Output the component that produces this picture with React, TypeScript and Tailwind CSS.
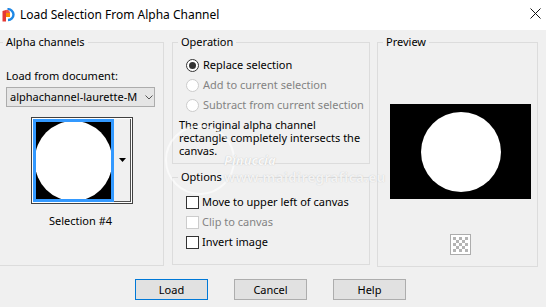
import React from 'react';

const font = "font-['Segoe_UI','Noto_Sans',sans-serif]";

function Radio({ label, checked, disabled }: { label: string; checked?: boolean; disabled?: boolean }) {
  return (
    <div className="flex items-center h-[20px] pl-[13px]">
      <span
        className={`w-[13px] h-[13px] rounded-full border bg-white flex items-center justify-center ${disabled ? 'border-[#cccccc]' : 'border-[#333333]'}`}
      >
        {checked && <span className="w-[7px] h-[7px] rounded-full bg-[#333333]" />}
      </span>
      <span className={`ml-[4px] whitespace-nowrap ${disabled ? 'text-[#838383]' : 'text-black'}`}>{label}</span>
    </div>
  );
}

function Check({ label, disabled }: { label: string; disabled?: boolean }) {
  return (
    <div className="flex items-center h-[20px] pl-[13px]">
      <span className={`w-[13px] h-[13px] border bg-white ${disabled ? 'border-[#cccccc]' : 'border-[#333333]'}`} />
      <span className={`ml-[3px] whitespace-nowrap ${disabled ? 'text-[#838383]' : 'text-black'}`}>{label}</span>
    </div>
  );
}

function Button({ label, focused }: { label: string; focused?: boolean }) {
  return (
    <button
      className={`w-[73px] h-[21px] bg-[#e1e1e1] border ${focused ? 'border-[#0078d7]' : 'border-[#adadad]'} text-black leading-none`}
    >
      {label}
    </button>
  );
}

function Group({ title, className, legend = 'ml-[5px]', children }: { title: string; className: string; legend?: string; children?: React.ReactNode }) {
  return (
    <fieldset className={`border border-[#dcdcdc] ${className}`}>
      <legend className={`${legend} px-[3px] leading-[16px] text-black`}>{title}</legend>
      {children}
    </fieldset>
  );
}

export default function App() {
  return (
    <div className={`w-[546px] h-[307px] overflow-hidden bg-[#f0f0f0] text-[11px] ${font}`}>
      {/* title bar */}
      <div className="h-[30px] bg-white flex items-center relative">
        <svg className="ml-[1px]" width="14" height="14" viewBox="0 0 14 14">
          <path d="M6.5 1.2 A5.5 5.5 0 0 1 12.5 6.5 A5.5 5.5 0 0 1 7 12" fill="none" stroke="#1e88e5" strokeWidth="2.4" />
          <path d="M1.5 3 L5 2 L5 13.5 L1.5 13.5 Z" fill="#e53935" />
          <path d="M5 5 L9 5 L9 9 L5 9 Z" fill="#fb8c00" />
          <path d="M5 2 A3 3 0 0 1 9 5 L5 5 Z" fill="#ef5350" />
        </svg>
        <span className="ml-[5px] text-black text-[12px]">Load Selection From Alpha Channel</span>
        <svg className="absolute right-[5px] top-[8px]" width="11" height="11" viewBox="0 0 11 11">
          <path d="M0.5 0.5 L10.5 10.5 M10.5 0.5 L0.5 10.5" stroke="#111" strokeWidth="1" />
        </svg>
      </div>

      {/* body */}
      <div className="relative">
        <div className="flex pt-[4px]">
          {/* alpha channels */}
          <Group title="Alpha channels" legend="ml-[3px]" className="w-[164px] h-[232px] border-l-0">
            <div className="pl-[6px] pt-[18px] leading-[16px]">Load from document:</div>
            <div className="ml-[6px] mt-[3px] w-[149px] h-[20px] bg-[#e5e5e5] border border-[#acacac] flex items-center">
              <span className="pl-[3px] w-[130px] overflow-hidden whitespace-nowrap">alphachannel-laurette-Mask</span>
              <svg className="ml-[8px]" width="8" height="5" viewBox="0 0 8 5">
                <path d="M0.5 0.5 L4 4 L7.5 0.5" fill="none" stroke="#555" strokeWidth="1" />
              </svg>
            </div>
            <div className="ml-[31px] mt-[10px] w-[102px] h-[87px] border border-[#404040] bg-white flex p-[1px]">
              <div className="w-[81px] h-full border-[3px] border-[#3399ff] bg-black overflow-hidden flex items-center justify-center">
                <div className="w-[77px] h-[80px] rounded-full bg-white shrink-0" />
              </div>
              <div className="flex-1 bg-[#f0f0f0] border-r border-b border-[#505050] flex items-center justify-center">
                <svg width="7" height="4" viewBox="0 0 7 4">
                  <path d="M0 0 L7 0 L3.5 4 Z" fill="#000" />
                </svg>
              </div>
            </div>
            <div className="mt-[9px] ml-[6px] w-[149px] text-center leading-[16px]">Selection #4</div>
          </Group>

          {/* middle column */}
          <div className="ml-[8px] flex flex-col">
            <Group title="Operation" className="w-[198px] h-[130px]">
              <div className="pt-[5px]">
                <Radio label="Replace selection" checked />
                <Radio label="Add to current selection" disabled />
                <Radio label="Subtract from current selection" disabled />
              </div>
              <p className="pl-[6px] mt-[3px] leading-[13px]">
                The original alpha channel
                <br />
                rectangle completely intersects the
                <br />
                canvas.
              </p>
            </Group>
            <Group title="Options" className="mt-[5px] w-[198px] h-[96px]">
              <div className="pt-[7px]">
                <Check label="Move to upper left of canvas" />
                <Check label="Clip to canvas" disabled />
                <Check label="Invert image" />
              </div>
            </Group>
          </div>

          {/* preview */}
          <Group title="Preview" className="ml-[7px] w-[161px] h-[233px]">
            <div className="pl-[12px] w-[153px] flex flex-col items-center">
              <div className="mt-[54px] w-[141px] h-[95px] bg-black flex items-center justify-center">
                <div className="w-[80px] h-[80px] rounded-full bg-white" />
              </div>
              <div className="mt-[35px] w-[21px] h-[21px] border border-[#adadad] bg-white p-[2px]">
                <svg width="15" height="15" viewBox="0 0 15 15">
                  {[0, 1, 2, 3, 4].map((r) =>
                    [0, 1, 2, 3, 4].map((c) =>
                      (r + c) % 2 === 0 ? <rect key={`${r}-${c}`} x={c * 3} y={r * 3} width="3" height="3" fill="#b4b4b4" /> : null
                    )
                  )}
                </svg>
              </div>
            </div>
          </Group>
        </div>

        {/* buttons */}
        <div className="flex pl-[135px] gap-[26px] mt-[12px]">
          <Button label="Load" focused />
          <Button label="Cancel" />
          <Button label="Help" />
        </div>

        {/* watermark */}
        <div className="absolute left-[165px] top-[95px] w-[70px] h-[70px] rounded-full border-[2px] border-white/60 pointer-events-none" />
        <div className="absolute left-[224px] top-[124px] pointer-events-none font-bold italic text-[13px] text-white/90 [text-shadow:0_0_1px_#b0b0b0] leading-none">
          Pinuccia
        </div>
        <div className="absolute left-[224px] top-[141px] pointer-events-none font-bold text-[13px] tracking-[0.5px] text-white/80 [text-shadow:0_0_1px_#bcbcbc] leading-none">
          www.maidiregrafica.eu
        </div>
      </div>
    </div>
  );
}
